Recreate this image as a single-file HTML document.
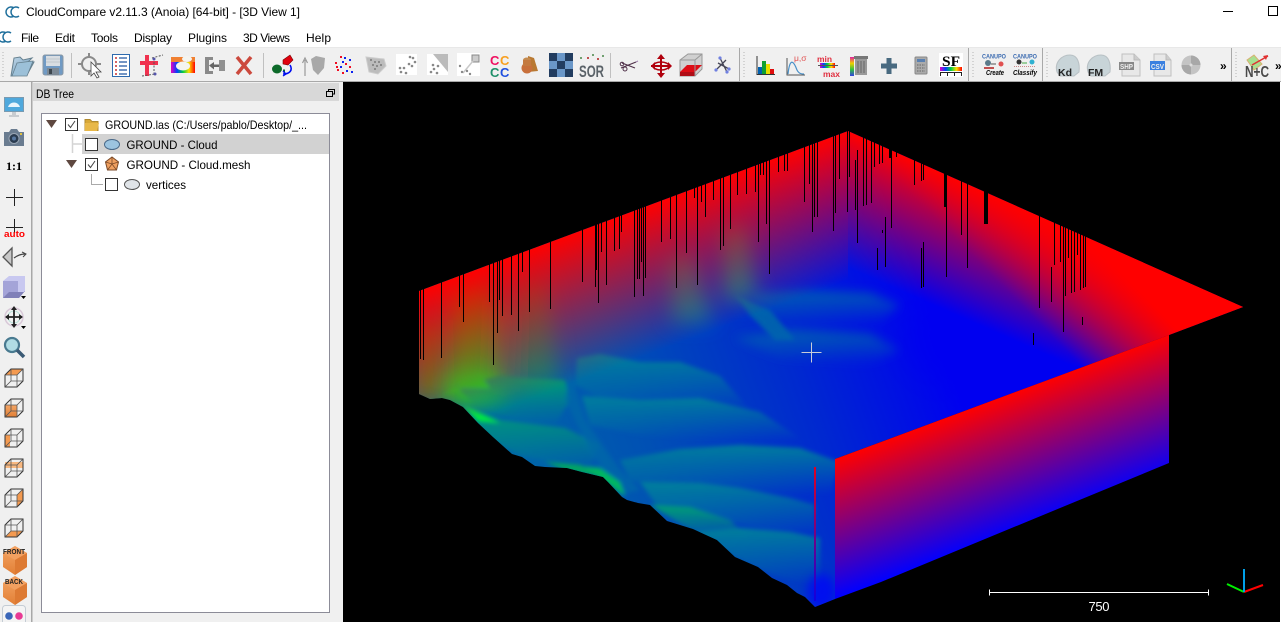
<!DOCTYPE html>
<html><head><meta charset="utf-8"><title>CloudCompare</title>
<style>
html,body{margin:0;padding:0;background:#fff;overflow:hidden;width:1281px;height:622px}
svg{display:block;position:absolute;left:0;top:0}
text{font-family:"Liberation Sans",sans-serif;font-size:12px;fill:#000}
</style></head><body>
<svg width="1281" height="622" viewBox="0 0 1281 622" xmlns="http://www.w3.org/2000/svg">
<defs>
<filter id="b1" x="-30%" y="-30%" width="160%" height="160%"><feGaussianBlur stdDeviation="2"/></filter>
<filter id="b2" x="-80%" y="-50%" width="260%" height="200%"><feGaussianBlur stdDeviation="10"/></filter>
<filter id="b3" x="-50%" y="-50%" width="200%" height="200%"><feGaussianBlur stdDeviation="18"/></filter>
<filter id="b4" x="-50%" y="-50%" width="200%" height="200%"><feGaussianBlur stdDeviation="5"/></filter>
<filter id="s" x="-10%" y="-10%" width="120%" height="120%"><feGaussianBlur stdDeviation=".35"/></filter>
<linearGradient id="base" gradientUnits="userSpaceOnUse" x1="480" y1="470" x2="930" y2="310">
<stop offset="0" stop-color="#006ca4"/><stop offset=".35" stop-color="#0050b4"/><stop offset=".7" stop-color="#0028d0"/><stop offset="1" stop-color="#0000f0"/></linearGradient>
<linearGradient id="rl" gradientUnits="userSpaceOnUse" x1="419" y1="291" x2="468" y2="422">
<stop offset="0" stop-color="#f00"/><stop offset="1" stop-color="#f00" stop-opacity="0"/></linearGradient>
<linearGradient id="rr" gradientUnits="userSpaceOnUse" x1="1040" y1="216" x2="990" y2="330">
<stop offset="0" stop-color="#f00"/><stop offset="1" stop-color="#f00" stop-opacity="0"/></linearGradient>
<linearGradient id="rc" gradientUnits="userSpaceOnUse" x1="1140" y1="292" x2="1073" y2="358">
<stop offset="0" stop-color="#f00"/><stop offset="1" stop-color="#f00" stop-opacity="0"/></linearGradient>
<linearGradient id="wall" gradientUnits="userSpaceOnUse" x1="835" y1="459" x2="881" y2="582">
<stop offset="0" stop-color="#f00"/><stop offset="1" stop-color="#00f"/></linearGradient>
<linearGradient id="st" x1="0" y1="0" x2="0" y2="1"><stop offset="0" stop-color="#e00020"/><stop offset="1" stop-color="#1000e0"/></linearGradient>
<linearGradient id="tg" x1="0" y1="0" x2="0" y2="1"><stop offset="0" stop-color="#00809c" stop-opacity=".95"/><stop offset="1" stop-color="#00809c" stop-opacity="0"/></linearGradient>
<linearGradient id="gg" x1="0" y1="0" x2="0" y2="1"><stop offset="0" stop-color="#009e74" stop-opacity=".95"/><stop offset="1" stop-color="#009e74" stop-opacity="0"/></linearGradient>
<linearGradient id="bl" x1="0" y1="0" x2="0" y2="1"><stop offset="0" stop-color="#0062b0" stop-opacity=".9"/><stop offset="1" stop-color="#0062b0" stop-opacity="0"/></linearGradient>
<linearGradient id="org" x1="0" y1="0" x2="0" y2="1"><stop offset="0" stop-color="#f4a666"/><stop offset="1" stop-color="#e27f35"/></linearGradient>
<linearGradient id="fld" x1="0" y1="0" x2="1" y2="1"><stop offset="0" stop-color="#c2d9ea"/><stop offset="1" stop-color="#5f8eb0"/></linearGradient>
<linearGradient id="rb" x1="0" y1="0" x2="1" y2="0"><stop offset="0" stop-color="#e800c0"/><stop offset=".25" stop-color="#0040ff"/><stop offset=".5" stop-color="#00d040"/><stop offset=".75" stop-color="#ffe000"/><stop offset="1" stop-color="#f00"/></linearGradient>
<linearGradient id="rbv" x1="0" y1="0" x2="0" y2="1"><stop offset="0" stop-color="#e020a0"/><stop offset=".33" stop-color="#f0d000"/><stop offset=".66" stop-color="#30c040"/><stop offset="1" stop-color="#3040e0"/></linearGradient>
<clipPath id="surf"><path d="M419 291L848 131L1243 307L1169 335L835 459L835 599L815 607L805 597L797 593L787 585L772 578L758 567L735 557L717 540L693 529L667 521L650 505L638 503L627 500L622 497L608 482L603 477L582 472L567 468L545 467L535 466L522 457L512 454L493 437L478 423L463 407L450 400L442 398L430 399L419 394Z"/></clipPath>
<clipPath id="lft"><rect x="400" y="100" width="448" height="520"/></clipPath>
<clipPath id="rgt"><rect x="848" y="100" width="420" height="520"/></clipPath>
<g id="cube"><path d="M1 7L7 1H19V13L13 19H1Z" fill="none" stroke="#333" stroke-width="1"/><path d="M1 7H13V19M13 7L19 1M1 19L7 13H19M7 1V13" fill="none" stroke="#555" stroke-width=".8"/></g>
<g id="cubeb"><path d="M0 8L12 1L24 8V22L12 30L0 22Z" fill="url(#org)"/><path d="M0 8L12 15L24 8L12 1Z" fill="#f2a060"/><path d="M12 15V30L24 22V8Z" fill="#dd7a33"/></g>
</defs>

<!-- title + menu -->
<rect width="1281" height="48" fill="#fff"/>
<g fill="none" stroke="#1f6f9c" stroke-width="1.500"><path d="M14 8a5 5 0 1 0 0 8"/><path d="M19 8a5 5 0 1 0 0 8"/></g>
<text x="26" y="16" textLength="274" lengthAdjust="spacing">CloudCompare v2.11.3 (Anoia) [64-bit] - [3D View 1]</text>
<path d="M1223 11.500H1233" stroke="#000" stroke-width="1"/>
<rect x="1268.500" y="6.500" width="9" height="9" fill="none" stroke="#000"/>
<g fill="none" stroke="#1f6f9c" stroke-width="1.500"><path d="M6 33a5 5 0 1 0 0 8"/><path d="M11 33a5 5 0 1 0 0 8"/></g>
<text x="21" y="42" textLength="18">File</text>
<text x="55" y="42" textLength="20">Edit</text>
<text x="91" y="42" textLength="27">Tools</text>
<text x="134" y="42" textLength="38">Display</text>
<text x="188" y="42" textLength="39">Plugins</text>
<text x="243" y="42" textLength="47">3D Views</text>
<text x="306" y="42" textLength="25">Help</text>

<!-- toolbar -->
<rect y="48" width="1281" height="34" fill="#f0f0f0"/>
<rect y="47" width="1281" height="1" fill="#e8e8e8"/>
<rect y="81" width="1281" height="1" fill="#a8a8a8"/>
<g stroke="#b4b4b4" stroke-width="1" stroke-dasharray="1 2" fill="none">
<path d="M3 52V79M744 52V79M973 52V79M1047 52V79M1236 52V79"/>
<path d="M1 85H27"/>
</g>
<g stroke="#c0c0c0" fill="none"><path d="M71.500 53V78M263.500 53V78M610.500 53V78"/></g>
<g stroke="#a8a8a8" fill="none"><path d="M739.500 48V81M968.500 48V81M1042.500 48V81M1231.500 48V81"/></g>

<g filter="url(#s)">
<path d="M11 76L14 58L20 57L23 60L32 58L28 62L34 62L27 75Z" fill="url(#fld)" stroke="#66808f"/>
<path d="M12 76L17 63L33 61L27 76Z" fill="#9cc0d8" stroke="#66808f" stroke-width=".8"/>
<rect x="43" y="55" width="20" height="20" rx="2" fill="#6f9ac4" stroke="#8a98a4"/>
<rect x="46" y="56" width="14" height="10" fill="#d8dde2"/><path d="M46 59H60M46 62H60" stroke="#c0c6cc"/>
<rect x="47" y="68" width="12" height="7" fill="#7d8a96"/><rect x="49" y="69" width="3" height="5" fill="#3d4650"/>
<circle cx="89" cy="64" r="7" fill="none" stroke="#8a8a8a" stroke-width="2"/>
<path d="M89 53V58M89 70V75M78 64H83M95 64H101" stroke="#8a8a8a" stroke-width="2"/>
<path d="M91 62L101 72L96 72L99 77L97 78L94 73L91 76Z" fill="#fff" stroke="#444" stroke-width=".8"/>
<rect x="112.500" y="54.500" width="17" height="22" fill="#fff" stroke="#2f6aae"/>
<path d="M119 58H127M119 62H127M119 66H127M119 70H127M119 74H127" stroke="#2356a0" stroke-width="1.300"/>
<path d="M115 58h2M115 62h2M115 66h2M115 70h2M115 74h2" stroke="#c83030" stroke-width="1.500"/>
<path d="M147 55V76M140 63H158" stroke="#f03050" stroke-width="4"/>
<path d="M152 58L163 55M154 62V74M142 76L155 74" stroke="#555" stroke-dasharray="2 1.500" fill="none"/><circle cx="154" cy="59" r="1.500" fill="#55a"/><circle cx="155" cy="74" r="1.500" fill="#55a"/>
<rect x="171" y="57" width="24" height="16" fill="url(#rb)"/>
<rect x="171" y="57" width="24" height="5" fill="#f08030"/>
<ellipse cx="183" cy="66" rx="7" ry="4.500" fill="#f4f4f0"/><ellipse cx="187" cy="59" rx="5" ry="3" fill="#f4f4f0"/>
<path d="M205 57H213V60H209V71H213V74H205Z" fill="#8a8a8a"/><rect x="219" y="60" width="6" height="11" fill="#909090"/>
<path d="M209 65.500L214 62V64.500H219V67H214V69.500Z" fill="#666"/>
<path d="M237 57L251 74M251 57L237 74" stroke="#cc4a3e" stroke-width="3.500"/>
<path d="M283 60L290 55L293 60L288 65L283 64Z" fill="#e00010" stroke="#700" stroke-width=".6"/>
<ellipse cx="277" cy="69" rx="5" ry="4.500" fill="#0a6a2a"/><path d="M283 71H285" stroke="#0a6a2a" stroke-width="3"/>
<path d="M290 65C293 70 290 74 283 74" fill="none" stroke="#0010f0" stroke-width="1.600"/><path d="M283 71L286 74L283 76" fill="none" stroke="#0010f0" stroke-width="1.300"/>
<path d="M305 76V60M302.500 63L305 58L307.500 63" stroke="#999" fill="none" stroke-width="1.200"/>
<path d="M311 59L316 56L325 58L324 68L318 75L313 70Z" fill="#a8a8a8"/>
<g fill="#f01020"><rect x="340" y="56" width="2" height="2"/><rect x="335" y="62" width="2" height="2"/><rect x="337" y="69" width="2" height="2"/><rect x="345" y="63" width="2" height="2"/><rect x="349" y="66" width="2" height="2"/><rect x="342" y="72" width="2" height="2"/><rect x="336" y="66" width="2" height="2"/></g>
<g fill="#1020f0"><rect x="344" y="57" width="2" height="2"/><rect x="349" y="59" width="2" height="2"/><rect x="340" y="66" width="2" height="2"/><rect x="346" y="70" width="2" height="2"/><rect x="351" y="71" width="2" height="2"/><rect x="342" y="61" width="2" height="2"/></g>
<path d="M366 57L384 59L386 66L378 74L369 72Z" fill="#bcbcbc" stroke="#ccc"/>
<g fill="#666"><circle cx="371" cy="60" r=".9"/><circle cx="375" cy="62" r=".9"/><circle cx="379" cy="62" r=".9"/><circle cx="373" cy="65" r=".9"/><circle cx="377" cy="66" r=".9"/><circle cx="381" cy="65" r=".9"/><circle cx="375" cy="69" r=".9"/></g>
<rect x="396" y="54" width="21" height="21" fill="#fff"/>
<g fill="#888"><circle cx="401" cy="72" r="1.300"/><circle cx="404" cy="68" r="1.300"/><circle cx="406" cy="73" r="1.300"/><circle cx="409" cy="64" r="1.300"/><circle cx="413" cy="58" r="1.300"/><circle cx="415" cy="62" r="1.300"/><circle cx="410" cy="57" r="1.300"/><circle cx="412" cy="66" r="1.300"/><circle cx="400" cy="68" r="1.300"/></g>
<rect x="427" y="54" width="21" height="21" fill="#fff"/><path d="M433 54H448V72Z" fill="#bbb"/>
<g fill="#888"><circle cx="431" cy="72" r="1.300"/><circle cx="434" cy="69" r="1.300"/><circle cx="437" cy="73" r="1.300"/><circle cx="433" cy="65" r="1.300"/><circle cx="438" cy="66" r="1.300"/></g>
<rect x="457" y="53" width="23" height="23" fill="#fff"/><rect x="472" y="55" width="7" height="7" fill="#ccc" stroke="#888"/><path d="M463 73L473 61" stroke="#c8c8c8" stroke-width="1.500"/>
<g fill="#888"><circle cx="460" cy="66" r="1.200"/><circle cx="462" cy="72" r="1.200"/><circle cx="467" cy="71" r="1.200"/><circle cx="470" cy="74" r="1.200"/></g>
</g>
<text x="490" y="65" style="font-size:13px;font-weight:bold;fill:#f01060">C</text><text x="500" y="65" style="font-size:13px;font-weight:bold;fill:#f8a020">C</text><text x="490" y="77" style="font-size:13px;font-weight:bold;fill:#20906a">C</text><text x="500" y="77" style="font-size:13px;font-weight:bold;fill:#2050e0">C</text>
<g filter="url(#s)">
<path d="M528 56L534 58L538 71L528 72Z" fill="#b97930"/><circle cx="527" cy="68" r="5.500" fill="#c8703a"/><ellipse cx="527" cy="60" rx="4" ry="2.500" fill="#c48a50"/><rect x="523" y="60" width="8" height="6" fill="#c47a40"/>
<rect x="549" y="53" width="24" height="24" fill="#233e60"/>
<path d="M557 53h8v8h-8zM549 61h8v8h-8zM565 61h8v8h-8zM557 69h8v8h-8z" fill="#6b97c8"/>
</g>
<text x="579" y="77" textLength="25" lengthAdjust="spacingAndGlyphs" style="font-size:17px;font-weight:bold;fill:#5a6268">SOR</text>
<g fill="#c05050"><rect x="587" y="57" width="2" height="2"/><rect x="597" y="58" width="2" height="2"/></g><g fill="#70a070"><rect x="580" y="57" width="2" height="2"/><rect x="592" y="54" width="2" height="2"/><rect x="602" y="55" width="2" height="2"/></g>
<g filter="url(#s)">
<path d="M621 68L636 62M622 63L635 68" stroke="#50304a" stroke-width="1.200" fill="none"/><circle cx="625" cy="69" r="2" fill="none" stroke="#50304a"/><circle cx="622" cy="64" r="1.800" fill="none" stroke="#50304a"/><path d="M636 62L638 61" stroke="#a080b0"/>
<path d="M661 56V76M651 66H671" stroke="#b00010" stroke-width="2"/><path d="M661 54L657 59H665ZM661 78L657 73H665ZM651 66L655 62V70ZM672 66L668 62V70Z" fill="#b00010"/><ellipse cx="661" cy="66" rx="8" ry="4" fill="none" stroke="#b00010" stroke-width="1.500"/>
<path d="M680 60L688 54H702V69L695 76H680Z" fill="#d0d0d0" stroke="#999"/><path d="M680 72L687 65H702L695 72Z" fill="#dd1018"/><path d="M680 72H695V76H680Z" fill="#b01018"/><path d="M695 60V76M680 60H695L702 54" stroke="#999" fill="none"/>
<path d="M720 58L727 72M716 70L726 60M718 63L729 69" stroke="#445" stroke-width="1.300" fill="none"/><g fill="#7080e0"><circle cx="720" cy="58" r="1.600"/><circle cx="727" cy="72" r="1.600"/><circle cx="716" cy="70" r="1.600"/><circle cx="729" cy="69" r="1.600"/></g>
<path d="M757 56V74.500H775" stroke="#333" fill="none"/><rect x="758" y="67" width="4" height="7" fill="#0060b0"/><rect x="762" y="61" width="4" height="13" fill="#10a030"/><rect x="766" y="64" width="4" height="10" fill="#e8e000"/><rect x="770" y="69" width="4" height="5" fill="#e01010"/>
<path d="M787 58V75H805" stroke="#555" fill="none"/><path d="M788 74C790 56 794 62 797 70C799 74 802 74 804 74" stroke="#4a90c8" fill="none" stroke-width="1.200"/>
</g>
<text x="794" y="61" style="font-size:8.500px;fill:#e05050">μ,σ</text>
<text x="817" y="62" style="font-size:8.500px;font-weight:bold;fill:#e03040">min</text>
<text x="823" y="77" style="font-size:8.500px;font-weight:bold;fill:#e03040">max</text>
<rect x="820" y="63" width="15" height="5" fill="url(#rb)"/><path d="M818 65.500H838" stroke="#555"/>
<g filter="url(#s)">
<rect x="850" y="57" width="4" height="19" fill="url(#rbv)"/><rect x="855" y="59" width="12" height="16" fill="#999"/><rect x="854" y="56" width="14" height="3" fill="#777"/><path d="M858 61V73M861 61V73M864 61V73" stroke="#666"/>
<path d="M889 58V74M881 66H897" stroke="#4a6a80" stroke-width="5"/>
<rect x="915" y="57" width="12" height="17" rx="1" fill="#aaa" stroke="#888"/><rect x="917" y="59" width="8" height="3" fill="#5a80b0"/><path d="M917 65h8M917 68h8M917 71h8" stroke="#666" stroke-dasharray="1.500 1"/>
</g>
<rect x="939" y="53" width="24" height="24" fill="#fff"/>
<text x="942" y="66" textLength="18" lengthAdjust="spacingAndGlyphs" style="font-family:'Liberation Serif',serif;font-size:15px;font-weight:bold">SF</text>
<rect x="940" y="67" width="22" height="4" fill="url(#rb)"/>
<path d="M940.500 76V72.500H961.500V76M947.500 73V76M954.500 73V76" stroke="#222" fill="none"/>
<text x="982" y="58.500" textLength="24" lengthAdjust="spacingAndGlyphs" style="font-size:6px;font-weight:bold;fill:#3a6ab0">CANUPO</text>
<text x="1013" y="58.500" textLength="24" lengthAdjust="spacingAndGlyphs" style="font-size:6px;font-weight:bold;fill:#3a6ab0">CANUPO</text>
<circle cx="988" cy="63" r="3" fill="#5a7a8a"/><path d="M991 64H996" stroke="#555"/><circle cx="1001" cy="64" r="2.500" fill="#e05050"/><rect x="984" y="67" width="10" height="2" fill="#c05050"/>
<circle cx="1019" cy="62" r="2.500" fill="#333"/><path d="M1022 63H1027" stroke="#4a4"/><circle cx="1032" cy="62" r="2.500" fill="#30b0d0"/><path d="M1014 66.500h22" stroke="#c88" stroke-dasharray="1 1"/>
<text x="986" y="75" textLength="18" lengthAdjust="spacingAndGlyphs" style="font-size:7px;font-weight:bold;font-style:italic">Create</text>
<text x="1013" y="75" textLength="24" lengthAdjust="spacingAndGlyphs" style="font-size:7px;font-weight:bold;font-style:italic">Classify</text>
<g filter="url(#s)">
<path d="M1057 72C1054 62 1062 55 1070 55C1078 55 1080 64 1079 72L1074 76H1060Z" fill="#c8d4d8" stroke="#b8c0c4"/>
<path d="M1088 72C1085 62 1093 55 1101 55C1109 55 1111 64 1110 72L1105 76H1091Z" fill="#c8d4d8" stroke="#b8c0c4"/>
<path d="M1122 54H1134L1140 60V76H1122Z" fill="#e8e8e8" stroke="#c0c0c0"/><path d="M1134 54V60H1140" fill="#ccc" stroke="#bbb"/>
<path d="M1154 54H1166L1171 60V76H1154Z" fill="#e8e8e8" stroke="#c0c0c0"/><path d="M1166 54V60H1171" fill="#ccc" stroke="#bbb"/>
<circle cx="1191" cy="65" r="9.500" fill="#c4c4c4"/><path d="M1191 65L1191 55.500A9.500 9.500 0 0 1 1200.500 65ZM1191 65L1191 74.500A9.500 9.500 0 0 1 1181.500 65Z" fill="#a8a8a8"/><circle cx="1191" cy="65" r="1.500" fill="#ddd"/>
<path d="M1247 60L1254 55L1262 64L1254 70Z" fill="#a8e090" stroke="#d8b070" stroke-width="1"/><path d="M1252 65L1268 56" stroke="#e03030" stroke-width="1.500"/><path d="M1268 55L1263 56L1266 60Z" fill="#e03030"/>
</g>
<text x="1058" y="76" style="font-size:10.500px;font-weight:bold;fill:#222">Kd</text>
<text x="1088" y="76" style="font-size:10.500px;font-weight:bold;fill:#222">FM</text>
<rect x="1119" y="62" width="15" height="8" fill="#888"/><text x="1120" y="69" textLength="13" lengthAdjust="spacingAndGlyphs" style="font-size:7px;font-weight:bold;fill:#eee">SHP</text>
<rect x="1150" y="61" width="15" height="9" fill="#3a80e0"/><text x="1151" y="69" textLength="13" lengthAdjust="spacingAndGlyphs" style="font-size:7px;font-weight:bold;fill:#eee">CSV</text>
<text x="1245" y="77" textLength="24" lengthAdjust="spacingAndGlyphs" style="font-size:16px;font-weight:bold;fill:#4a4a4a">N+C</text>
<text x="1220" y="70" style="font-size:12px;font-weight:bold">»</text>
<text x="1275" y="70" style="font-size:12px;font-weight:bold">»</text>

<!-- left toolbar & panel -->
<rect y="82" width="343" height="540" fill="#f0f0f0"/>
<rect x="31" y="82" width="1.500" height="540" fill="#a8a8a8"/>
<rect x="33" y="83" width="306" height="18" fill="#d8d8d8"/>
<text x="36" y="98" textLength="38" lengthAdjust="spacingAndGlyphs">DB Tree</text>
<g fill="none" stroke="#000"><rect x="326.500" y="91.500" width="6" height="5"/><path d="M328.500 91V89.500H334.500V94H332.500"/></g>
<rect x="41.500" y="113.500" width="288" height="499" fill="#fff" stroke="#8c8c98"/>
<rect x="82" y="134" width="247" height="20" fill="#d2d2d2"/>

<!-- tree -->
<path d="M46 120H57L51.500 128Z" fill="#5e4840"/>
<rect x="65.500" y="118.500" width="12" height="12" fill="#fff" stroke="#333"/><path d="M68 124.500L70.500 127.500L75 121" fill="none" stroke="#444"/>
<path d="M85 119.500H90L92 121.500H98V130.500H85Z" fill="#d8a838" stroke="#b08a30"/><path d="M85 123H99L97 131H85Z" fill="#e8b848"/>
<text x="105" y="129" textLength="202" lengthAdjust="spacingAndGlyphs">GROUND.las (C:/Users/pablo/Desktop/_...</text>
<path d="M72.500 134V153M73 144H84" stroke="#d4d4d4" stroke-width="1.500" fill="none"/>
<rect x="85.500" y="138.500" width="12" height="12" fill="#fff" stroke="#333"/>
<ellipse cx="112" cy="144.500" rx="7.500" ry="5" fill="#9cc4e0" stroke="#4a6a8a"/>
<text x="126.500" y="149" textLength="91" lengthAdjust="spacingAndGlyphs">GROUND - Cloud</text>
<path d="M66 160H77L71.500 168Z" fill="#5e4840"/>
<rect x="85.500" y="158.500" width="12" height="12" fill="#fff" stroke="#333"/><path d="M88 164.500L90.500 167.500L95 161" fill="none" stroke="#444"/>
<path d="M112 157L118.500 162L116.500 170H107.500L105.500 162Z" fill="#f0a060" stroke="#7a4a28"/><path d="M112 157L112 164M105.500 162L112 164L118.500 162M107.500 170L112 164L116.500 170" stroke="#7a4a28" fill="none" stroke-width=".8"/>
<text x="126.500" y="169" textLength="124" lengthAdjust="spacingAndGlyphs">GROUND - Cloud.mesh</text>
<path d="M91.500 174V184.500H103" stroke="#aaa" fill="none"/>
<rect x="105.500" y="178.500" width="12" height="12" fill="#fff" stroke="#333"/>
<ellipse cx="132" cy="184.500" rx="7.500" ry="5" fill="#e0e4e8" stroke="#555"/>
<text x="146" y="189" textLength="40" lengthAdjust="spacingAndGlyphs">vertices</text>

<!-- left icons -->
<g filter="url(#s)">
<rect x="4.500" y="97.500" width="19" height="14" fill="#50a8dc" stroke="#7a9ab0"/><path d="M8 107C10 101 18 101 20 107Z" fill="#e8f4fc"/>
<path d="M12 112H16V115H19V117H9V115H12Z" fill="#c8ccd0"/>
<path d="M4 132H9L11 129H17L19 132H24V146H4Z" fill="#6a7c90"/><circle cx="14" cy="138.500" r="5" fill="#2a3a50" stroke="#9aa6b4"/><circle cx="14" cy="138.500" r="2" fill="#5878a0"/><rect x="20" y="133" width="2" height="2" fill="#e0c040"/>
</g>
<text x="6" y="170" textLength="16" lengthAdjust="spacingAndGlyphs" style="font-family:'Liberation Serif',serif;font-size:12px;font-weight:bold">1:1</text>
<path d="M6 197.500H23M14.500 189V206" stroke="#222"/>
<path d="M6 227.500H23M14.500 219V233" stroke="#222"/>
<text x="4" y="237" textLength="21" lengthAdjust="spacingAndGlyphs" style="font-size:9.500px;font-weight:bold;fill:#f00">auto</text>
<g filter="url(#s)">
<path d="M12 248V266L3 257Z" fill="#c8c8c8" stroke="#555" stroke-width="1.300"/><path d="M14 258C18 255 21 254 25 254" fill="none" stroke="#444" stroke-width="1.300"/><path d="M22 252L26 254L23 257" fill="none" stroke="#444"/>
<path d="M3 281L9 276H25V291L19 298H3Z" fill="#c8c8f0"/><rect x="3" y="281" width="15" height="17" fill="#a4a4d8"/><path d="M3 298L9 292H25V291L19 298Z" fill="#8080b8"/>
<path d="M21 296H26L23.500 299Z" fill="#000"/>
<circle cx="14" cy="317" r="9" fill="none" stroke="#d8c8d8" stroke-width="1.500"/>
<circle cx="14" cy="317" r="6" fill="none" stroke="#b8e0d8" stroke-width="1"/>
<path d="M14 309V325M6 317H22" stroke="#222" stroke-width="1.800"/><path d="M14 306L11 310H17ZM14 328L11 324H17ZM5 317L9 314V320ZM23 317L19 314V320Z" fill="#222"/>
<path d="M21 326H26L23.500 329Z" fill="#000"/>
<circle cx="12" cy="345" r="7" fill="#b0dce4" stroke="#4a7a90" stroke-width="2.200"/><path d="M17 350L24 357" stroke="#3a5a74" stroke-width="3.500"/>
</g>
<path d="M5 375L11 369H23L17 375Z" fill="#f49a50"/><use href="#cube" x="4" y="368"/>
<rect x="5" y="405" width="12" height="12" fill="url(#org)"/><use href="#cube" x="4" y="398"/>
<rect x="5" y="435" width="5" height="12" fill="#f49a50"/><use href="#cube" x="4" y="428"/>
<rect x="5" y="462" width="18" height="6" fill="#f8b880"/><use href="#cube" x="4" y="458"/>
<path d="M17 495L23 489V501L17 507Z" fill="#f49a50"/><use href="#cube" x="4" y="488"/>
<path d="M5 537L11 531H23L17 537Z" fill="#f49a50"/><use href="#cube" x="4" y="518"/>
<use href="#cubeb" x="3" y="545"/>
<text x="3" y="554" textLength="22" lengthAdjust="spacingAndGlyphs" style="font-size:7.500px;font-weight:bold;fill:#222">FRONT</text>
<use href="#cubeb" x="3" y="575"/>
<text x="5" y="584" textLength="18" lengthAdjust="spacingAndGlyphs" style="font-size:7.500px;font-weight:bold;fill:#222">BACK</text>
<rect x="2.500" y="605.500" width="23" height="20" rx="3" fill="#f4f4f4" stroke="#c4ccd4"/>
<circle cx="9" cy="616" r="3.800" fill="#3a66b8"/><circle cx="19" cy="616" r="3.800" fill="#e83a94"/>

<!-- 3D view -->
<rect x="343" y="82" width="938" height="540" fill="#000"/>
<rect x="1280" y="82" width="1" height="540" fill="#fff"/>
<g clip-path="url(#surf)">
<rect x="400" y="120" width="860" height="500" fill="url(#base)"/>
<ellipse cx="1000" cy="340" rx="90" ry="50" fill="#0000f0" filter="url(#b3)"/>
<g filter="url(#b2)">
<path d="M450 280H490L505 400H445Z" fill="#00d030"/>
<path d="M419 320H438L440 400H415Z" fill="#30a020"/>
<path d="M495 300H515L525 385H490Z" fill="#308060" opacity=".7"/>
<path d="M518 280H546L558 385H515Z" fill="#008878"/>
<path d="M668 255H692L712 322H672Z" fill="#008898" opacity=".85"/>
<path d="M722 225H746L756 300H724Z" fill="#009090" opacity=".85"/>
</g>
<ellipse cx="470" cy="385" rx="24" ry="16" fill="#00e830" filter="url(#b2)"/>
<g filter="url(#b1)">
<path d="M577 358L600 354L640 362L680 362L720 376L750 410L700 410L640 405L600 398L575 385Z" fill="url(#tg)"/>
<path d="M455 386L500 376L565 380L570 400L555 425L520 420L480 410Z" fill="url(#gg)"/>
<path d="M582 396L640 400L700 398L760 412L800 438L700 440L640 435L590 425Z" fill="url(#tg)"/>
<path d="M462 405L500 420L565 428L600 445L590 468L560 465L520 455L490 440Z" fill="url(#gg)"/>
<path d="M620 460L680 449L740 445L800 448L840 462L830 495L720 490L660 490L630 480Z" fill="url(#tg)"/>
<path d="M640 482L700 483L740 488L790 498L815 505L815 535L770 530L700 515L660 510Z" fill="url(#tg)"/>
<path d="M650 505L690 507L730 520L750 540L700 535Z" fill="url(#gg)"/>
<path d="M695 532L740 528L790 532L820 538L820 585L790 580L760 570L735 558Z" fill="url(#tg)"/>
<path d="M570 370L585 420L620 470L640 490L620 495L590 450L565 400Z" fill="#0068a8" opacity=".7"/>
<path d="M577 466L600 468L620 482L625 496L608 484Z" fill="#00b860"/>
<path d="M440 397L463 388L490 388L478 372L460 385Z" fill="#00e030"/>
<path d="M463 405L500 423L478 421Z" fill="#00e840"/>
<path d="M545 462L580 465L605 478L565 470Z" fill="#00a860"/>
<path d="M735 295L770 310L795 340L775 340L750 315Z" fill="#0078a0" opacity=".7"/>
</g>
<g filter="url(#b4)">
<path d="M747 293L807 291L870 293L900 305L880 322L820 325L770 318Z" fill="url(#bl)"/>
<path d="M735 338L790 330L870 334L900 350L870 365L840 362L780 358Z" fill="url(#bl)"/>
</g>
<ellipse cx="822" cy="592" rx="14" ry="18" fill="#0000ff" opacity=".7" filter="url(#b4)"/>
<rect x="400" y="120" width="860" height="500" fill="url(#rl)" clip-path="url(#lft)"/>
<rect x="400" y="120" width="860" height="500" fill="url(#rr)" clip-path="url(#rgt)"/>
<rect x="848" y="120" width="420" height="300" fill="url(#rc)"/>
</g>
<path d="M835 459L1169 335V463L881 582L835 599Z" fill="url(#wall)"/>
<rect x="814" y="467" width="2" height="134" fill="url(#st)"/>
<path fill="none" stroke="#000" stroke-width="1" shape-rendering="crispEdges" d="M420.500 100V359M423.500 100V360M441.500 100V358M459.500 100V307M463.500 100V322M489.500 100V302M493.500 100V365M497.500 100V333M499.500 100V300M502.500 100V316M511.500 100V315M518.500 100V331M522.500 100V272M529.500 100V312M550.500 100V309M582.500 100V282M595.500 100V287M596.500 100V270M598.500 100V303M601.500 100V252M606.500 100V285M614.500 100V251M619.500 100V249M621.500 100V232M634.500 100V297M637.500 100V279M639.500 100V279M641.500 100V262M643.500 100V296M645.500 100V278M661.500 100V242M670.500 100V239M676.500 100V288M686.500 100V253M694.500 100V198M697.500 100V285M701.500 100V202M705.500 100V217M713.500 100V200M720.500 100V250M723.500 100V246M730.500 100V229M737.500 100V195M746.500 100V194M755.500 100V192M758.500 100V242M760.500 100V175M763.500 100V175M766.500 100V224M769.500 100V274M778.500 100V172M784.500 100V171M787.500 100V171M804.500 100V202M809.500 100V184M812.500 100V232M814.500 100V217M817.500 100V217M833.500 100V231M835.500 100V213M839.500 100V179M847.500 100V212M849.500 100V177M855.500 160V210M857.500 150V243M863.500 100V206M866.500 100V205M871.500 100V203M874.500 100V167M879.500 100V164M882.500 100V163M891.500 100V228M896.500 100V157M914.500 100V185M921.500 100V181M923.500 100V180M946.500 100V277M961.500 100V235M967.500 100V268M1039.500 100V308M1054.500 100V265M1060.500 100V262M1063.500 100V332M1065.500 100V296M1068.500 100V258M1071.500 100V293M1074.500 100V292M1077.500 100V255M1080.500 100V290M1083.500 100V288M1085.500 100V287M885.500 217V267M882.500 230V233M877.500 248V270M921.500 248V288M923.500 242V287M1051.500 267V302M1082.500 317V325M1033.500 333V345"/>
<rect x="944" y="100" width="3" height="107" fill="#000"/>
<rect x="984" y="100" width="4" height="124" fill="#000"/>
<rect x="889" y="100" width="2" height="58" fill="#000"/>
<path d="M811 342V362M801 352H821" stroke="#c8ccd8" stroke-width="1" transform="translate(.5 .5)"/>
<!-- scale -->
<path d="M989.500 592.500H1208.500M989.500 589.500V595.500M1208.500 589.500V595.500" stroke="#fff" stroke-width="1"/>
<text x="1088.500" y="611" textLength="21" style="font-size:13px;fill:#fff">750</text>
<!-- axes -->
<path d="M1244 592L1263 585" stroke="#f00" stroke-width="2"/>
<path d="M1244 592L1227 584" stroke="#00f000" stroke-width="2"/>
<path d="M1244 592V569" stroke="#00a0e8" stroke-width="2"/>
</svg>
</body></html>
